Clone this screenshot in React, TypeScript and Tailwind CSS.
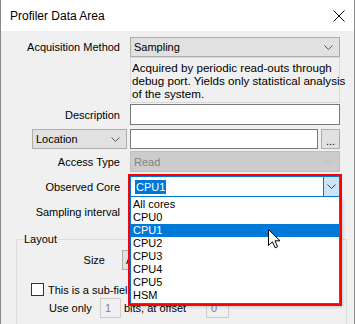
import React from "react";

function Chevron({ color = "#555" }: { color?: string }) {
  return (
    <svg width="9" height="5" viewBox="0 0 9 5" className="shrink-0">
      <polyline points="0.5,0.5 4.5,4.5 8.5,0.5" fill="none" stroke={color} strokeWidth="1" />
    </svg>
  );
}

function Select({
  value,
  className = "",
  disabled = false,
}: {
  value: string;
  className?: string;
  disabled?: boolean;
}) {
  return (
    <div
      className={`flex items-center justify-between border pl-[3px] pr-[6px] ${
        disabled
          ? "border-[#bfbfbf] bg-[#cccccc] text-[#838383]"
          : "border-[#adadad] bg-[#e1e1e1]"
      } ${className}`}
    >
      <span>{value}</span>
      <Chevron color={disabled ? "#bfbfbf" : "#555"} />
    </div>
  );
}

function Row({
  label,
  children,
  className = "",
}: {
  label?: string;
  children: React.ReactNode;
  className?: string;
}) {
  return (
    <div className={`flex items-center ${className}`}>
      <div className="w-[129px] pr-[10px] text-right whitespace-nowrap">{label}</div>
      <div className="w-[210px] h-full">{children}</div>
    </div>
  );
}

const cores = ["All cores", "CPU0", "CPU1", "CPU2", "CPU3", "CPU4", "CPU5", "HSM"];

export default function App() {
  return (
    <div className="w-[355px] h-[324px] overflow-hidden bg-[#f0f0f0] border-x border-[#8a8a8a] text-[11px] leading-[14px] text-black font-['Liberation_Sans',Arial,sans-serif]">
      {/* title bar */}
      <div className="h-[31px] bg-white flex items-center justify-between pl-[9px] pr-[9px]">
        <span className="text-[12px]">Profiler Data Area</span>
        <svg width="12" height="12" viewBox="0 0 12 12">
          <path d="M0.5 0.5 L11.5 11.5 M11.5 0.5 L0.5 11.5" stroke="#000" strokeWidth="1" />
        </svg>
      </div>

      <div className="pt-[6px]">
        <Row label="Acquisition Method" className="h-[20px]">
          <Select value="Sampling" className="h-full" />
        </Row>

        <Row className="h-[46px]">
          <div className="h-full border border-[#d9d9d9] pl-[1px] pt-[3px] text-[11.6px] leading-[13px] whitespace-nowrap">
            Acquired by periodic read-outs through
            <br />
            debug port. Yields only statistical analysis
            <br />
            of the system.
          </div>
        </Row>

        <Row label="Description" className="h-[21px] mt-[1px]">
          <div className="h-full border border-[#7a7a7a] bg-white" />
        </Row>

        <div className="flex h-[20px] mt-[4px]">
          <div className="w-[129px] pl-[31px] pr-[3px]">
            <Select value="Location" className="h-full" />
          </div>
          <div className="w-[210px] flex gap-[3px]">
            <div className="flex-1 border border-[#7a7a7a] bg-white" />
            <div className="w-[19px] border border-[#adadad] bg-[#e1e1e1] flex items-end justify-center pb-[2px] leading-[10px]">
              ...
            </div>
          </div>
        </div>

        <Row label="Access Type" className="h-[21px] mt-[2px]">
          <Select value="Read" disabled className="h-full" />
        </Row>

        <Row label="Observed Core" className="h-[21px] mt-[4px]">
          <div className="relative h-full">
            <div className="h-full flex border border-[#0078d7] bg-white">
              <div className="flex-1 flex items-center pl-[4px]">
                <span className="bg-[#0078d7] text-white px-[1px]">CPU1</span>
              </div>
              <div className="w-[16px] border-l border-[#0078d7] bg-[#cce4f7] flex items-center justify-center">
                <Chevron color="#444" />
              </div>
            </div>

            {/* open dropdown list */}
            <div className="absolute left-0 top-[21px] z-10 w-[210px] bg-white border-x border-b border-[#0078d7] pt-[1px] pb-[1px] shadow-[3px_3px_3px_rgba(0,0,0,0.18)]">
              {cores.map((c) => (
                <div
                  key={c}
                  className={`h-[13px] leading-[13px] pl-[2px] ${
                    c === "CPU1" ? "bg-[#0078d7] text-white" : ""
                  }`}
                >
                  {c}
                </div>
              ))}
            </div>

            {/* red highlight frame */}
            <div className="absolute -left-[2px] -top-[2px] z-20 w-[214px] h-[132px] border-2 border-[#ff0000] pointer-events-none" />

            {/* mouse pointer */}
            <svg
              className="absolute left-[138px] top-[53px] z-30"
              width="13"
              height="20"
              viewBox="0 0 13 20"
            >
              <path
                d="M0.5 0.5 L0.5 16.5 L4.5 12.8 L7.2 18.8 L9.6 17.8 L7 11.8 L12 11.8 Z"
                fill="#fff"
                stroke="#000"
                strokeWidth="1"
                strokeLinejoin="miter"
              />
            </svg>
          </div>
        </Row>

        <Row label="Sampling interval" className="h-[21px] mt-[4px]">
          <div className="h-full border border-[#7a7a7a] bg-white" />
        </Row>

        <fieldset className="mt-[10px] ml-[15px] w-[331px] h-[120px] border border-[#dcdcdc]">
          <legend className="ml-[6px] px-[1px] leading-[15px]">Layout</legend>

          <div className="flex items-center h-[20px] mt-[3px]">
            <div className="w-[88px] text-right">Size</div>
            {/* only the left edge of this combo shows past the open list */}
            <div className="ml-[17px] w-[8px] h-full overflow-hidden">
              <Select value="Auto" className="w-[200px] h-full" />
            </div>
          </div>

          <div className="flex items-center h-[13px] mt-[13px] ml-[14px]">
            <div className="w-[13px] h-[13px] border border-[#333] bg-white shrink-0" />
            <div className="ml-[4px] w-[80px] overflow-hidden whitespace-nowrap">
              This is a sub-field
            </div>
          </div>

          <div className="flex items-center h-[20px] mt-[2px] ml-[32px]">
            <span className="w-[51px]">Use only</span>
            <div className="w-[21px] h-full border border-[#cccccc] pl-[4px] flex items-center text-[#838383]">
              1
            </div>
            <span className="ml-[3px] w-[82px]">bits, at offset</span>
            <div className="w-[23px] h-full border border-[#cccccc] pl-[4px] flex items-center text-[#838383]">
              0
            </div>
          </div>
        </fieldset>
      </div>
    </div>
  );
}
